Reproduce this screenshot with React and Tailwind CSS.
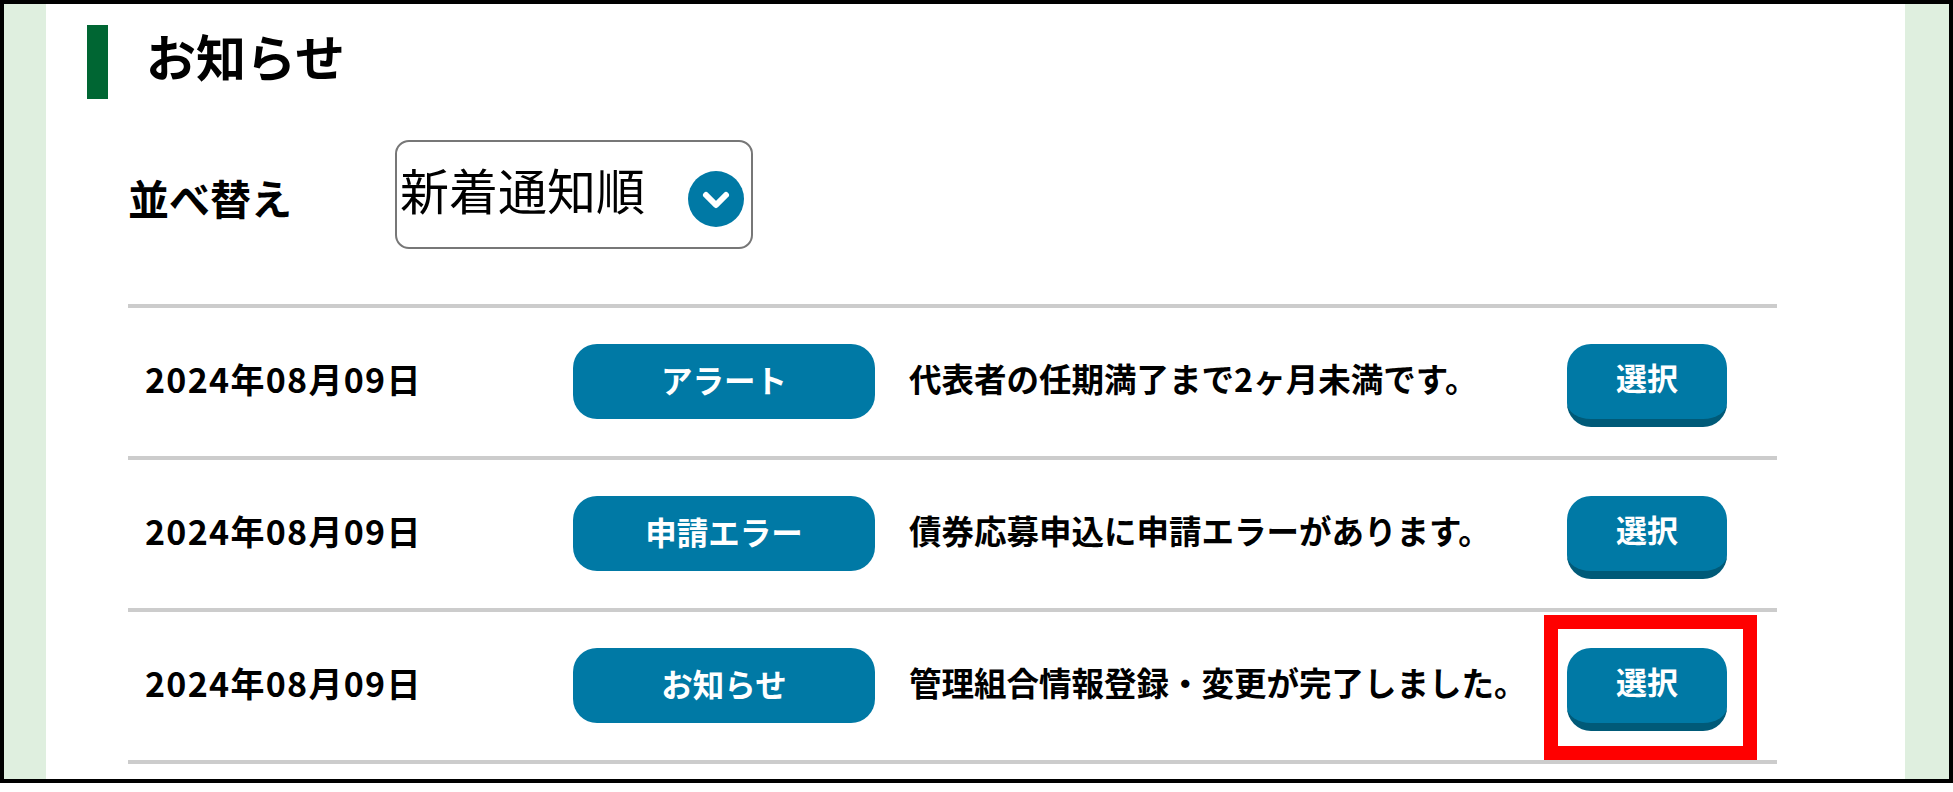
const rows = [
  { date: "2024年08月09日", tag: "アラート", msg: "代表者の任期満了まで2ヶ月未満です。" },
  { date: "2024年08月09日", tag: "申請エラー", msg: "債券応募申込に申請エラーがあります。" },
  { date: "2024年08月09日", tag: "お知らせ", msg: "管理組合情報登録・変更が完了しました。", marked: true },
];

function Row({ date, tag, msg, marked }) {
  return (
    <div className="relative flex h-[152px] items-center border-t-[4px] border-[#cccccc] pb-[2px]">
      <div className="ml-[17px] w-[428px] pb-[5px] text-[34px] font-bold tracking-[1.3px] leading-none text-black">{date}</div>
      <div className="flex h-[75px] w-[302px] items-center justify-center rounded-[24px] bg-[#0079a5] pb-[3px] text-[31.5px] font-bold text-white">{tag}</div>
      <div className="ml-[34px] w-[658px] whitespace-nowrap pb-[5px] text-[32.5px] font-bold leading-none text-black">{msg}</div>
      <button className="mt-[8px] flex h-[83px] w-[160px] items-center justify-center rounded-[24px] border-b-[8px] border-[#005a78] bg-[#0079a5] pb-[7px] text-[31px] font-bold text-white">選択</button>
      {marked && (
        <div className="absolute left-[1416px] top-[3px] h-[145px] w-[213px] border-[14px] border-[#ff0000]" />
      )}
    </div>
  );
}

export default function App() {
  return (
    <div className="h-[792px] w-[1953px] bg-white font-['Noto_Sans_CJK_JP',sans-serif]">
      <div className="flex h-[783px] w-full overflow-hidden border-[4px] border-black">
        <div className="w-[42px] shrink-0 bg-[#dfefdf]" />
        <main className="min-w-0 flex-1 bg-white">
          <div className="ml-[41px] mt-[21px] flex h-[74px] items-center">
            <div className="h-full w-[21px] bg-[#006633]" />
            <h1 className="ml-[38px] pb-[14px] text-[50px] font-bold leading-none text-black">お知らせ</h1>
          </div>
          <div className="ml-[82px] mt-[41px] flex h-[109px] items-center">
            <span className="w-[267px] pt-[6px] text-[41px] font-bold leading-none text-black">並べ替え</span>
            <div className="flex h-[109px] w-[358px] items-start justify-between rounded-[14px] border-[2px] border-[#777777] bg-white pl-[3px] pr-[7px]">
              <span className="mt-[15px] text-[49px] leading-[64px] text-black">新着通知順</span>
              <svg viewBox="0 0 56 56" className="mt-[29px] h-[56px] w-[56px]">
                <circle cx="28" cy="28" r="28" fill="#0079a5" />
                <path d="M18 24 L28 34 L38 24" fill="none" stroke="#ffffff" strokeWidth="6" strokeLinecap="round" strokeLinejoin="round" />
              </svg>
            </div>
          </div>
          <div className="ml-[82px] mt-[55px] w-[1649px]">
            {rows.map((r, i) => (
              <Row key={i} {...r} />
            ))}
            <div className="h-[4px] bg-[#cccccc]" />
          </div>
        </main>
        <div className="w-[44px] shrink-0 bg-[#dfefdf]" />
      </div>
    </div>
  );
}
